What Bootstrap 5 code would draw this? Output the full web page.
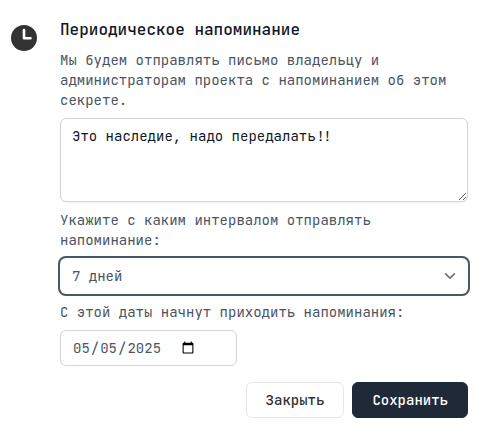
<!DOCTYPE html>
<html lang="ru">
<head>
<meta charset="utf-8">
<meta name="viewport" content="width=device-width, initial-scale=1">
<title>Периодическое напоминание</title>
<link href="https://cdn.jsdelivr.net/npm/bootstrap@5.3.0/dist/css/bootstrap.min.css" rel="stylesheet">
<style>
  body {
    font-family: "JetBrains Mono", "DejaVu Sans Mono", "Liberation Mono", monospace;
    font-size: 14px;
    line-height: 20px;
    color: #4b5563;
    background: #fff;
  }
  .reminder { padding: 18px 20px 18px 10px; gap: 22px; }
  .reminder-icon { width: 28px; height: 28px; margin-top: 6px; }
  .reminder-title { font-size: 16px; line-height: 24px; font-weight: 500; color: #111827; }
  .reminder .form-control,
  .reminder .form-select {
    font-size: 14px;
    line-height: 20px;
    padding: 7px 11px;
    border-color: #d1d5db;
    border-radius: 6px;
    color: #4b5563;
    box-shadow: 0 1px 2px rgba(0, 0, 0, .05);
  }
  .reminder textarea.form-control { min-height: 84px; color: #111827; }
  .reminder .form-select {
    padding-right: 40px;
    border-color: transparent;
    box-shadow: 0 0 0 2px #4b5563;
    background-image: url("data:image/svg+xml,%3Csvg xmlns='http://www.w3.org/2000/svg' fill='none' viewBox='0 0 20 20'%3E%3Cpath stroke='%236b7280' stroke-linecap='round' stroke-linejoin='round' stroke-width='1.5' d='M6 8l4 4 4-4'/%3E%3C/svg%3E");
    background-size: 22px 22px;
    background-position: right 6px center;
  }
  .reminder .date-field { width: 177px; height: 36px; box-shadow: none; }
  .date-field::-webkit-datetime-edit { flex: none; }
  .date-field::-webkit-datetime-edit-month-field,
  .date-field::-webkit-datetime-edit-day-field,
  .date-field::-webkit-datetime-edit-year-field { padding: 0 1px; }
  .date-field::-webkit-calendar-picker-indicator { margin-left: 0; }
  .reminder .btn { font-size: 14px; line-height: 20px; padding: 7px 19px; border-radius: 6px; font-weight: 500; }
  .btn-close-form { color: #333; background: #fff; border-color: #e5e7eb; }
  .btn-save { color: #fff; background: #1f2937; border-color: #1f2937; }
</style>
</head>
<body>
<main class="reminder d-flex align-items-start">
  <svg class="reminder-icon flex-shrink-0" viewBox="0 0 28 28" aria-hidden="true">
    <circle cx="14" cy="14" r="13" fill="#333"/>
    <path d="M14 6V14.2h6.5" fill="none" stroke="#fff" stroke-width="2.6" stroke-linecap="round" stroke-linejoin="round"/>
  </svg>
  <form class="flex-grow-1 d-flex flex-column gap-2">
    <h1 class="reminder-title m-0">Периодическое напоминание</h1>
    <label for="message">Мы будем отправлять письмо владельцу и администраторам проекта с напоминанием об этом секрете.</label>
    <textarea class="form-control" id="message" rows="3" spellcheck="false">Это наследие, надо передалать!!</textarea>
    <label for="interval">Укажите с каким интервалом отправлять напоминание:</label>
    <select class="form-select" id="interval">
      <option selected>7 дней</option>
    </select>
    <label for="start">С этой даты начнут приходить напоминания:</label>
    <input class="form-control date-field align-self-start" type="date" id="start" value="2025-05-05">
    <div class="d-flex justify-content-end gap-2 mt-2">
      <button type="button" class="btn btn-close-form">Закрыть</button>
      <button type="submit" class="btn btn-save">Сохранить</button>
    </div>
  </form>
</main>
<script src="https://cdn.jsdelivr.net/npm/bootstrap@5.3.0/dist/js/bootstrap.bundle.min.js"></script>
</body>
</html>
